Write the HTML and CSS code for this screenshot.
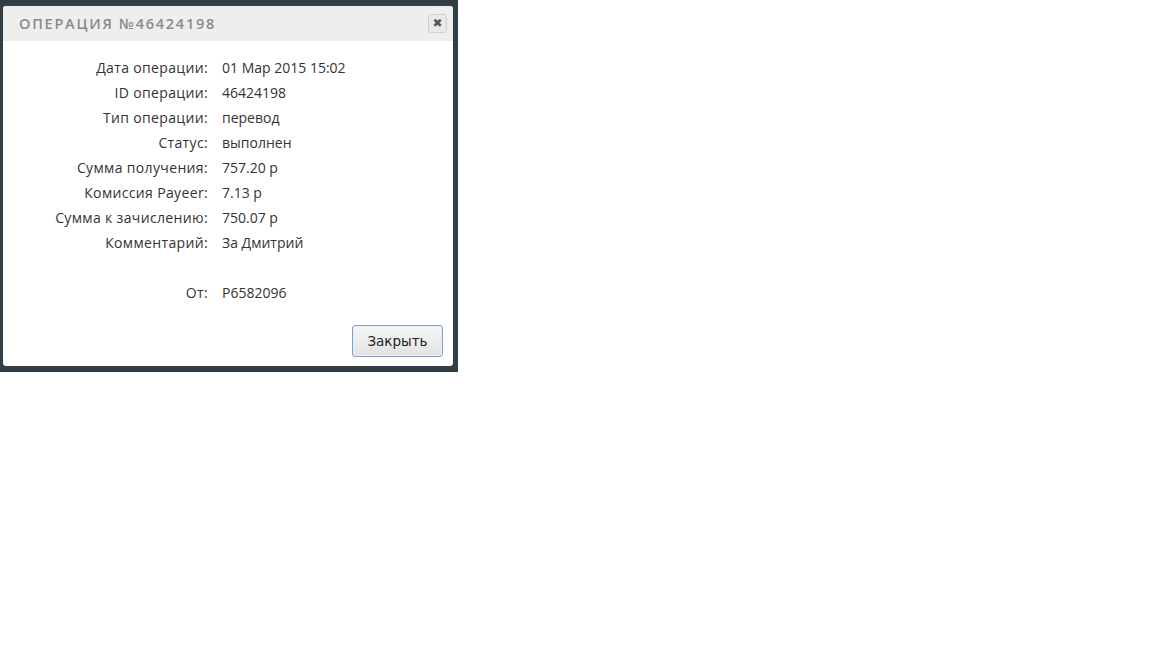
FILE: index.html
```html
<!DOCTYPE html>
<html lang="ru">
<head>
    <meta charset="UTF-8">
    <title>Операция №46424198</title>
    <link rel="stylesheet" href="styles.css">
</head>
<body>
    <div class="overlay">
        <div class="dialog">
            <div class="dialog-title">
                <span>Операция №46424198</span>
                <button class="close-btn" title="Закрыть">&#10006;</button>
            </div>
            <div class="dialog-body">
                <div class="row"><span class="label">Дата операции:</span><span class="value">01 Мар 2015 15:02</span></div>
                <div class="row"><span class="label">ID операции:</span><span class="value">46424198</span></div>
                <div class="row"><span class="label">Тип операции:</span><span class="value">перевод</span></div>
                <div class="row"><span class="label">Статус:</span><span class="value">выполнен</span></div>
                <div class="row"><span class="label">Сумма получения:</span><span class="value">757.20 р</span></div>
                <div class="row"><span class="label">Комиссия Payeer:</span><span class="value">7.13 р</span></div>
                <div class="row"><span class="label">Сумма к зачислению:</span><span class="value">750.07 р</span></div>
                <div class="row"><span class="label">Комментарий:</span><span class="value">За Дмитрий</span></div>
                <div class="row"><span class="label"></span><span class="value"></span></div>
                <div class="row"><span class="label">От:</span><span class="value">P6582096</span></div>
            </div>
            <div class="dialog-footer">
                <button class="btn">Закрыть</button>
            </div>
        </div>
    </div>
</body>
</html>
```

FILE: styles.css
```css
* {
    margin: 0;
    padding: 0;
    box-sizing: border-box;
}

body {
    background: #fff;
    font-family: 'Open Sans', 'Liberation Sans', sans-serif;
}

.overlay {
    width: 458px;
    height: 372px;
    background: #323e46;
    padding: 6px 5px 6px 3px;
}

.dialog {
    background: #fff;
    height: 100%;
    border-radius: 3px;
    overflow: hidden;
    display: flex;
    flex-direction: column;
}

.dialog-title {
    height: 35px;
    background: #eeeeee;
    display: flex;
    align-items: center;
    justify-content: space-between;
    padding: 0 6px 0 16px;
    color: #8a8a8a;
    font-size: 14.5px;
    font-weight: 600;
    letter-spacing: 1.75px;
    text-transform: uppercase;
}

.close-btn {
    width: 19px;
    height: 19px;
    border: 1px solid #cfcfcf;
    border-radius: 3px;
    background: #e9e9e9;
    color: #555;
    font-size: 12px;
    font-weight: 700;
    line-height: 17px;
    text-align: center;
    font-family: 'DejaVu Sans', sans-serif;
}

.dialog-body {
    padding-top: 14px;
    font-size: 14px;
    color: #333;
}

.row {
    display: flex;
    height: 25px;
    align-items: center;
    gap: 14px;
}

.label {
    width: 205px;
    text-align: right;
    letter-spacing: 0.35px;
}

.dialog-footer {
    display: flex;
    justify-content: flex-end;
    padding: 20px 10px 0 0;
}

.btn {
    width: 91px;
    height: 32px;
    border: 1px solid #7f9fd0;
    border-radius: 3px;
    background: linear-gradient(#f6f6f6, #e2e2e2);
    box-shadow: inset 0 0 0 1px #e6eefa;
    color: #222;
    font-family: 'DejaVu Sans', sans-serif;
    font-size: 13.5px;
}
```
